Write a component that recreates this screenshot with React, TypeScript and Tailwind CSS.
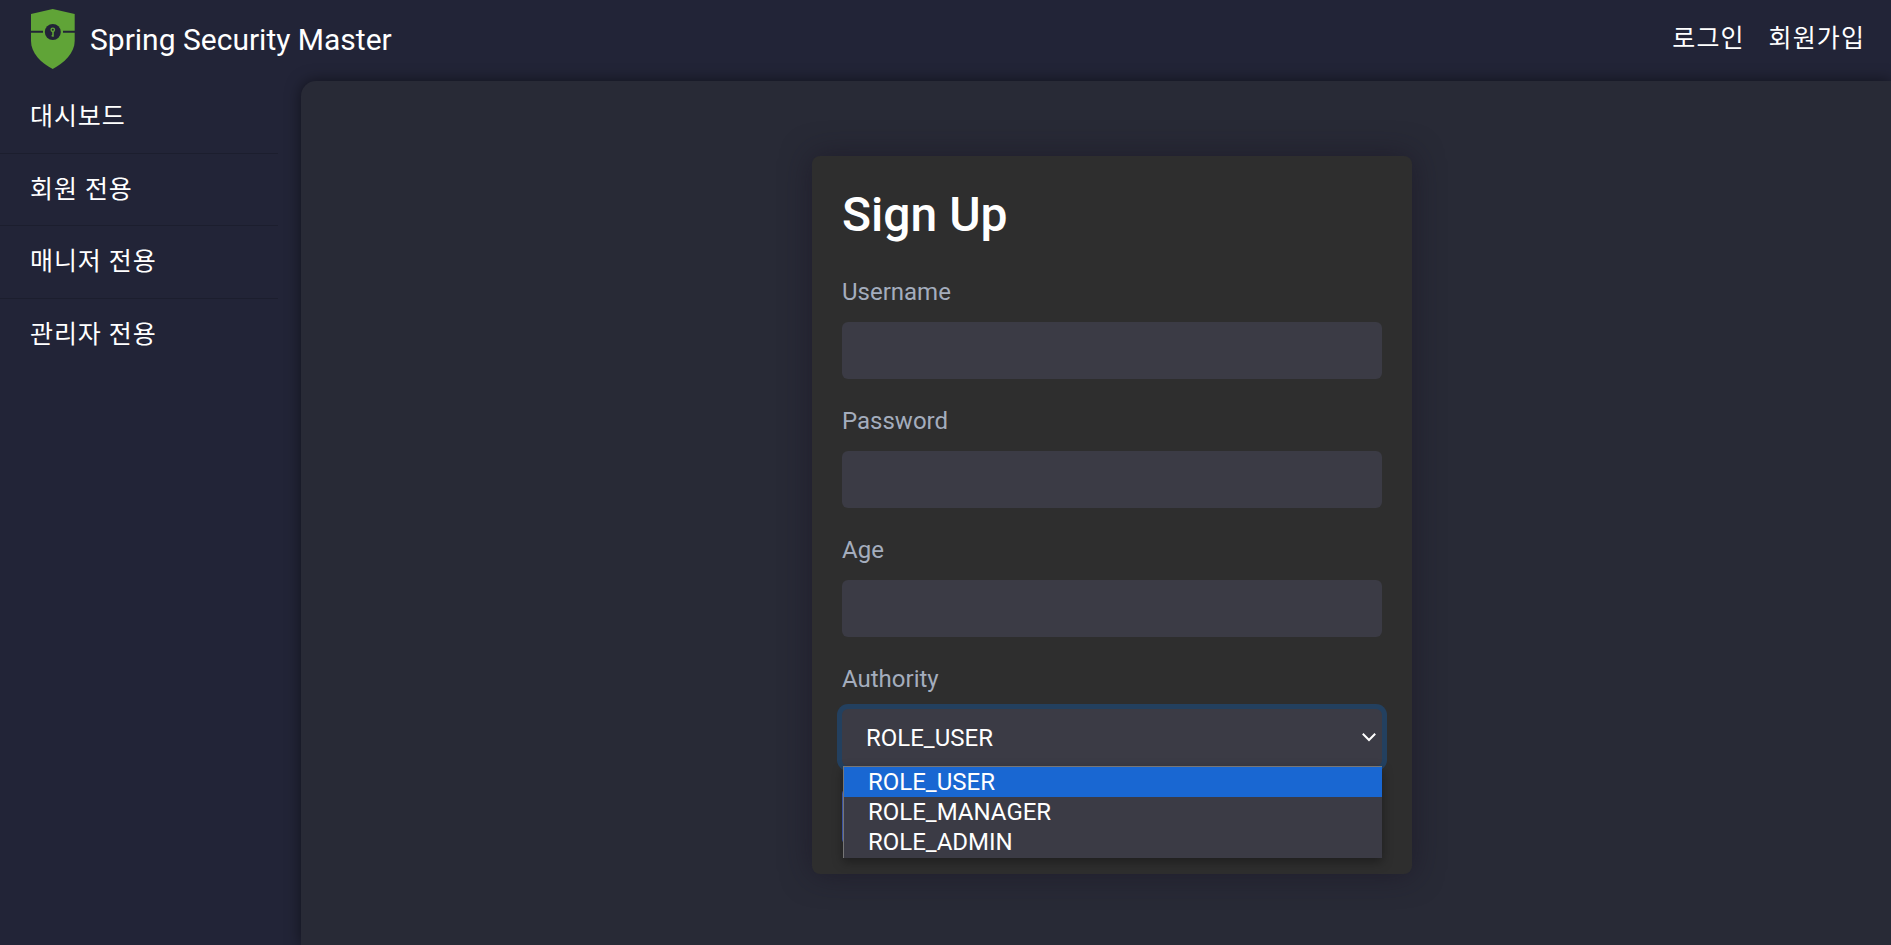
const menu = ["대시보드", "회원 전용", "매니저 전용", "관리자 전용"];
const fields = ["Username", "Password", "Age"];
const roles = ["ROLE_USER", "ROLE_MANAGER", "ROLE_ADMIN"];

function Logo() {
  return (
    <svg className="h-15 w-11 shrink-0" viewBox="0 0 44 60" fill="none">
      <path d="M0 5 L21.7 0 L43.7 5 V32 C43.7 44 33 54 21.7 60 C10 54 0 44 0 32 Z" fill="#60a437" />
      <path d="M0 22.8 H12 M32 22.8 H44" stroke="#222437" strokeWidth="2" />
      <circle cx="21.8" cy="23" r="8" fill="#222437" />
      <circle cx="21.8" cy="20.8" r="1.7" stroke="#60a437" strokeWidth="1.4" />
      <path d="M22 22.3 V27.7 M21.8 26.7 H20.6" stroke="#60a437" strokeWidth="1.6" />
    </svg>
  );
}

function AuthoritySelect() {
  return (
    <div className="relative">
      <button
        type="button"
        className="flex h-[57px] w-full items-center justify-between rounded-md bg-[#3b3b45] pr-[6px] pl-6 text-white shadow-[0_0_0_5px_#23405f]"
      >
        <span>ROLE_USER</span>
        <svg className="h-3 w-3.5" viewBox="0 0 14 12" fill="none" stroke="#fff" strokeWidth="2">
          <path d="M0.8 1.8 L7 8 L13.2 1.8" />
        </svg>
      </button>
      <ul className="absolute top-[57px] right-0 left-px z-10 border-t border-l border-[#767676] bg-[#3b3b45] pb-px text-white shadow-[0_4px_10px_rgba(0,0,0,0.35)]">
        {roles.map((role, i) => (
          <li key={role} className={i === 0 ? "h-[30px] bg-[#1967d2] pl-6 leading-[30px]" : "h-[30px] pl-6 leading-[30px]"}>
            {role}
          </li>
        ))}
      </ul>
    </div>
  );
}

export default function App() {
  return (
    <div className="flex h-screen flex-col overflow-hidden bg-[#222437] font-['Roboto','Noto_Sans_CJK_KR',sans-serif] text-2xl text-white">
      <header className="flex h-[81px] shrink-0 items-start justify-between pt-[9px] pr-[26px] pl-[31px]">
        <div className="flex items-start gap-[15px]">
          <Logo />
          <span className="pt-px text-[30px] leading-[60px]">Spring Security Master</span>
        </div>
        <nav className="flex gap-6 pt-3 text-[25px] leading-9 tracking-[1.1px]">
          <a>로그인</a>
          <a>회원가입</a>
        </nav>
      </header>
      <div className="flex min-h-0 grow">
        <aside className="w-[301px] shrink-0">
          <ul className="w-[278px] text-[25px] tracking-[0.9px]">
            {menu.map((item, i) => (
              <li key={item} className={i < 3 ? "h-[72.5px] border-b border-[#1c1e2e] pt-[18px] pl-[30px] leading-9" : "h-[72.5px] pt-[18px] pl-[30px] leading-9"}>
                {item}
              </li>
            ))}
          </ul>
        </aside>
        <main className="flex grow items-start justify-center rounded-tl-[15px] bg-[#282a36] pt-[75px] pl-8 shadow-[0_0_15px_rgba(0,0,0,0.5)]">
          <form className="h-[718px] w-[600px] rounded-lg bg-[#2e2e2e] px-[30px] shadow-[0_0_30px_rgba(25,20,35,0.6)]">
            <h1 className="pt-[30px] text-5xl leading-[58px] font-medium">Sign Up</h1>
            {fields.map((name) => (
              <div key={name} className="h-[129px] pt-[30px]">
                <label className="block h-[48px] leading-9 text-[#a4adbd]">{name}</label>
                <div className="h-[57px] rounded-md bg-[#3b3b45]" />
              </div>
            ))}
            <div className="pt-[30px]">
              <label className="block h-[48px] leading-9 text-[#a4adbd]">Authority</label>
              <AuthoritySelect />
            </div>
            <div className="mt-[22px] h-[57px] w-24 rounded-md bg-[#4361c2]" />
          </form>
        </main>
      </div>
    </div>
  );
}
